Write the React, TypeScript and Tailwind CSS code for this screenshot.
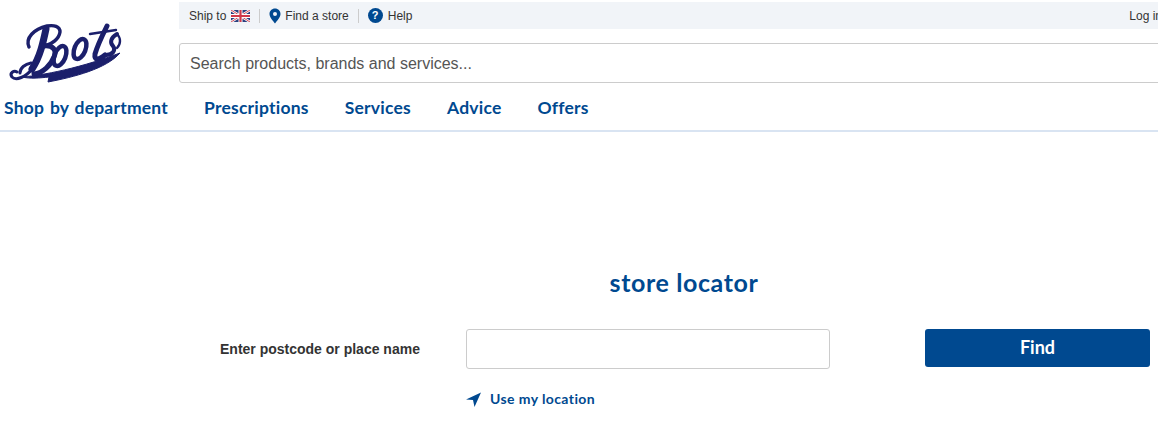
const navItems = ["Shop by department", "Prescriptions", "Services", "Advice", "Offers"]

function BootsLogo() {
  return (
    <svg width="130" height="90" viewBox="0 0 130 90" fill="none" stroke="#1b1f6b" strokeLinecap="round" className="shrink-0">
      <path d="M29 46C25 37 34 28 47 25C54 24 60 25 60 31C59 38 52 43 45 45" strokeWidth="3.400" />
      <path d="M46 28C43 42 40 56 32 68" strokeWidth="7" />
      <path d="M44 45C53 44 57 49 54 56C51 64 43 72 34 73" strokeWidth="5" />
      <path d="M32 68C26 76 16 80 12 76C9 72 14 69 17 71M20 72C20 67 25 63 31 62" strokeWidth="3" />
      <ellipse cx="60" cy="55" rx="5.500" ry="10.500" transform="rotate(22 60 55)" strokeWidth="4.500" />
      <ellipse cx="80" cy="48" rx="5.500" ry="10.500" transform="rotate(22 80 48)" strokeWidth="4.500" />
      <path d="M107 25C103 33 97 46 95 53C94 60 99 59 105 54" strokeWidth="5" />
      <path d="M90 33L116 29" strokeWidth="2.400" />
      <path d="M117 33C110 37 110 42 113 45C116 49 113 54 106 54" strokeWidth="4" />
      <path d="M117 33C121 37 121 43 117 47" strokeWidth="2.400" />
      <path
        d="M22 76C35 75 72 70 120 52C106 68 74 76 48 81L49 76C40 77 30 78 22 76Z"
        fill="#1b1f6b"
        strokeWidth="1"
      />
    </svg>
  )
}

function UkFlag() {
  return (
    <svg width="19" height="12" viewBox="0 0 19 12" className="ml-[5px]">
      <rect width="19" height="12" fill="#2a3f7e" />
      <path d="M0 0L19 12M19 0L0 12" stroke="#fff" strokeWidth="2.400" />
      <path d="M0 0L19 12M19 0L0 12" stroke="#d0384a" strokeWidth="0.900" />
      <path d="M9.500 0V12M0 6H19" stroke="#fff" strokeWidth="4" />
      <path d="M9.500 0V12M0 6H19" stroke="#d0384a" strokeWidth="2.200" />
    </svg>
  )
}

export default function App() {
  return (
    <div className="w-[1158px] h-[430px] overflow-hidden bg-white font-['Liberation_Sans',sans-serif]">
      <header className="h-[132px] border-b-2 border-[#d9e4f2]">
        <div className="flex h-[98px]">
          <div className="w-[179px] shrink-0 pt-[1px]">
            <BootsLogo />
          </div>
          <div className="w-[986px] shrink-0 pt-[2px]">
            <div className="flex h-[27px] items-center justify-between bg-[#f1f4f8] pl-[10px] pr-[3px] text-[12px] text-[#333]">
              <div className="flex items-center">
                <span>Ship to</span>
                <UkFlag />
                <span className="mx-[9px] h-[14px] w-px bg-[#ccc]" />
                <svg width="12" height="16" viewBox="0 0 12 16" className="mr-[4px]">
                  <path
                    fillRule="evenodd"
                    d="M6 0.500C2.800 0.500 0.500 2.900 0.500 6C0.500 9.600 4 12.600 6 15.500C8 12.600 11.500 9.600 11.500 6C11.500 2.900 9.200 0.500 6 0.500ZM6 4A2 2 0 1 1 6 8A2 2 0 1 1 6 4Z"
                    fill="#004990"
                  />
                </svg>
                <span>Find a store</span>
                <span className="mx-[9px] h-[14px] w-px bg-[#ccc]" />
                <span className="mr-[5px] flex h-[15px] w-[15px] items-center justify-center rounded-full bg-[#004990] text-[11px] font-bold text-white">
                  ?
                </span>
                <span>Help</span>
              </div>
              <span>Log in</span>
            </div>
            <div className="mt-[14px] flex h-[40px] items-center rounded-[3px] border border-[#ccc] pl-[10px] pt-[2px] text-[16px] text-[#555]">
              Search products, brands and services...
            </div>
          </div>
        </div>
        <nav className="flex gap-[36px] pl-[4px] font-['Lato',sans-serif] text-[17.5px] leading-[20px] font-bold tracking-[0.22px] [word-spacing:1.2px] text-[#004990]">
          {navItems.map((item) => (
            <span key={item}>{item}</span>
          ))}
        </nav>
      </header>

      <main>
        <h1 className="mt-[135px] pl-[210px] text-center font-['Lato',sans-serif] text-[25px] leading-[30px] font-bold tracking-[0.6px] text-[#004990]">
          store locator
        </h1>
        <div className="mt-[32px] flex items-start">
          <label className="ml-[220px] w-[200px] pt-[12px] text-[14px] leading-[16px] font-bold text-[#333]">
            Enter postcode or place name
          </label>
          <div className="ml-[46px]">
            <input className="block h-[40px] w-[364px] rounded-[3px] border border-[#ccc] bg-white" />
            <div className="mt-[20px] flex items-center gap-[9px] font-['Lato',sans-serif] text-[14px] leading-[20px] font-bold tracking-[0.4px] text-[#004990]">
              <svg width="15" height="15" viewBox="0 0 15 15">
                <path d="M15 0.500L0 7.500L7 8L8.500 15Z" fill="#004990" />
              </svg>
              Use my location
            </div>
          </div>
          <button className="ml-[95px] h-[38px] w-[225px] rounded-[3px] bg-[#004990] pb-[2px] font-['Lato',sans-serif] text-[18px] font-bold text-white">
            Find
          </button>
        </div>
      </main>
    </div>
  )
}
